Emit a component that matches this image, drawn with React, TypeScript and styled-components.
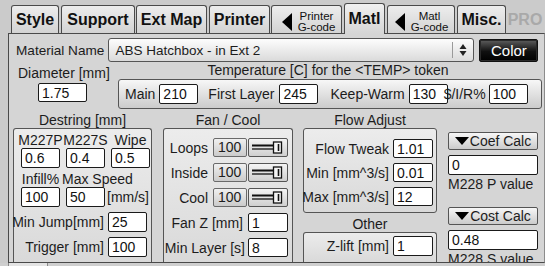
import React from "react";
import styled, { createGlobalStyle, css } from "styled-components";

const GlobalStyle = createGlobalStyle`
  html, body {
    margin: 0;
    padding: 0;
    background: #cbcbcb;
  }
  body {
    font-family: "Liberation Sans", Arial, sans-serif;
    font-size: 14px;
    color: #1c1c1c;
  }
  * {
    box-sizing: border-box;
  }
`;

const Screen = styled.div`
  width: 545px;
  height: 266px;
  overflow: hidden;
  display: flex;
  flex-direction: column;
`;

/* ---------- tabs ---------- */

const TabBar = styled.div`
  display: flex;
  align-items: flex-end;
  height: 33px;
  padding-left: 11px;
  position: relative;
  z-index: 2;
`;

const Tab = styled.div<{ $w: number; $gap?: number; $active?: boolean; $muted?: boolean }>`
  width: ${p => p.$w}px;
  margin-left: ${p => p.$gap ?? 0}px;
  height: ${p => (p.$active ? 31 : 28)}px;
  margin-bottom: ${p => (p.$active ? -1 : 0)}px;
  flex-shrink: 0;
  display: flex;
  align-items: center;
  justify-content: center;
  border: 1px solid #4a4a4a;
  border-bottom: none;
  border-radius: 3px 3px 0 0;
  background: linear-gradient(#ededed, #d3d3d3);
  font-size: 16px;
  font-weight: bold;
  color: #111;
  ${p =>
    p.$active &&
    css`
      background: linear-gradient(#f0f0f0, #d5d5d5);
    `}
  ${p =>
    p.$muted &&
    css`
      border-color: transparent;
      background: transparent;
      color: #a9a9a9;
    `}
`;

const ArrowTab = styled(Tab)<{ $pad: number }>`
  justify-content: flex-start;
  align-items: flex-end;
  padding-left: ${p => p.$pad}px;
  padding-bottom: 0;
`;

const LeftTri = styled.span`
  width: 0;
  height: 0;
  margin-bottom: 2px;
  border-top: 9px solid transparent;
  border-bottom: 9px solid transparent;
  border-right: 10px solid #000;
  flex-shrink: 0;
`;

const TwoLine = styled.span`
  flex: 1;
  text-align: center;
  font-size: 11.5px;
  font-weight: normal;
  line-height: 11px;
  padding-bottom: 0;
  height: 22px;
`;

/* ---------- panel ---------- */

const Panel = styled.div`
  margin-left: 8px;
  height: 230px;
  flex-shrink: 0;
  border: 1px solid #4a4a4a;
  border-right-color: #8c8c8c;
  background: #d5d5d5;
  padding: 4px 2px 0 4px;
  display: flex;
  flex-direction: column;
  overflow: hidden;
`;

const BottomStrip = styled.div`
  flex: 1;
  display: flex;
  background: #cfcfcf;
`;

const StripNub = styled.div`
  margin-left: 8px;
  width: 40px;
  border-left: 1px solid #8a8a8a;
  border-right: 1px solid #8a8a8a;
  background: #e4e4e4;
`;

const Row = styled.div<{ $mt?: number; $h?: number }>`
  display: flex;
  align-items: ${p => (p.$h ? "center" : "flex-start")};
  margin-top: ${p => p.$mt ?? 0}px;
  ${p => p.$h && `height: ${p.$h}px;`}
  flex-shrink: 0;
`;

const Text = styled.span<{ $ml?: number; $size?: number }>`
  margin-left: ${p => p.$ml ?? 0}px;
  font-size: ${p => p.$size ?? 14}px;
  white-space: nowrap;
  flex-shrink: 0;
`;

const Select = styled.div`
  width: 366px;
  height: 24px;
  margin-left: 4px;
  border: 1px solid #555;
  border-radius: 3px;
  background: linear-gradient(#fdfdfd, #dadada);
  display: flex;
  align-items: center;
  padding-left: 6px;
  font-size: 13.5px;
`;

const SelectValue = styled.span`
  flex: 1;
  white-space: nowrap;
`;

const SelectArrows = styled.span`
  width: 21px;
  height: 16px;
  border-left: 1px solid #9a9a9a;
  display: flex;
  align-items: center;
  justify-content: center;
`;

const ColorButton = styled.div`
  width: 59px;
  height: 23px;
  margin-left: 5px;
  border: 1px solid #111;
  border-radius: 2px;
  background: linear-gradient(#5e5e5e, #101010 55%, #000);
  color: #fff;
  font-size: 15px;
  display: flex;
  align-items: center;
  justify-content: center;
  box-shadow: inset 0 0 0 1px #2a2a2a;
`;

const Field = styled.input<{ $w?: number; $h?: number; $ml?: number }>`
  width: ${p => p.$w ?? 39}px;
  height: ${p => p.$h ?? 20}px;
  margin: 0 0 0 ${p => p.$ml ?? 0}px;
  flex-shrink: 0;
  background: #fff;
  border: 1px solid #1a1a1a;
  border-radius: 2px;
  padding: 0 0 0 3px;
  font-family: "Liberation Sans", Arial, sans-serif;
  font-size: 14px;
  color: #111;
  outline: none;
`;

const Heading = styled.div<{ $pr?: number }>`
  height: 17px;
  line-height: 16px;
  text-align: center;
  white-space: nowrap;
  padding-right: ${p => p.$pr ?? 0}px;
`;

const DiameterBlock = styled.div`
  width: 105px;
  display: flex;
  flex-direction: column;
  padding-left: 5px;
  padding-top: 3px;
  line-height: 16px;
`;

const TempBlock = styled.div`
  width: 424px;
  display: flex;
  flex-direction: column;
`;

const Raised = styled.div`
  border: 1px solid #555;
  border-radius: 3px;
  background: linear-gradient(#f7f7f7, #cbcbcb);
`;

const TempBox = styled(Raised)`
  height: 30px;
  display: flex;
  align-items: center;
  padding-left: 6px;
`;

/* ---------- lower columns ---------- */

const Columns = styled.div`
  flex: 1;
  display: flex;
  margin-top: 3px;
  min-height: 0;
`;

const Column = styled.div<{ $w: number; $ml?: number }>`
  width: ${p => p.$w}px;
  margin-left: ${p => p.$ml ?? 0}px;
  display: flex;
  flex-direction: column;
  flex-shrink: 0;
`;

const GroupBox = styled.div<{ $open?: boolean; $pt?: number; $pr?: number; $gap?: number }>`
  border: 1px solid #555;
  border-radius: 3px;
  background: linear-gradient(#ececec, #d9d9d9);
  padding: ${p => p.$pt ?? 3}px ${p => p.$pr ?? 4}px 6px 4px;
  display: flex;
  flex-direction: column;
  gap: ${p => p.$gap ?? 0}px;
  ${p =>
    p.$open &&
    css`
      flex: 1;
      border-bottom: none;
      border-radius: 3px 3px 0 0;
    `}
`;

const DestringGrid = styled.div`
  display: grid;
  grid-template-columns: repeat(3, 45px);
  grid-template-rows: 16px 20px 19px 20px;
  justify-items: center;
  line-height: 16px;
`;

const ColLabel = styled.span<{ $span?: boolean }>`
  white-space: nowrap;
  align-self: end;
  ${p =>
    p.$span &&
    css`
      grid-column: span 2;
      justify-self: start;
      margin-left: -1px;
    `}
`;

const Unit = styled.span`
  justify-self: start;
  align-self: center;
  margin-left: -1px;
  white-space: nowrap;
`;

const PairRow = styled.div<{ $mt?: number; $h?: number; $gap?: number }>`
  display: flex;
  justify-content: flex-end;
  align-items: center;
  gap: ${p => p.$gap ?? 4}px;
  height: ${p => p.$h ?? 20}px;
  margin-top: ${p => p.$mt ?? 0}px;
  white-space: nowrap;
`;

const Readout = styled.div`
  width: 34px;
  height: 19px;
  border: 1px solid #6a6a6a;
  border-radius: 2px;
  background: linear-gradient(#f0f0f0, #cbcbcb);
  padding-left: 4px;
  line-height: 17px;
  margin-left: 1px;
`;

const Slider = styled.div`
  width: 40px;
  height: 19px;
  margin-left: -3px;
  border: 1px solid #555;
  border-radius: 2px;
  background: linear-gradient(#f4f4f4, #cfcfcf);
`;

const CalcButton = styled(Raised)`
  height: 20px;
  display: flex;
  align-items: center;
  justify-content: center;
  border-radius: 2px;
  white-space: nowrap;
`;

const DownTri = styled.span`
  width: 0;
  height: 0;
  border-left: 7px solid transparent;
  border-right: 7px solid transparent;
  border-top: 8px solid #000;
  margin-right: 1px;
`;

const Caption = styled.div`
  line-height: 16px;
  margin-top: 1px;
  white-space: nowrap;
`;

const FanSlider = () => (
  <Slider>
    <svg width="38" height="17" viewBox="0 0 38 17">
      <line x1="3" y1="6.5" x2="25" y2="6.5" stroke="#111" strokeWidth="2" />
      <line x1="3" y1="10" x2="25" y2="10" stroke="#111" strokeWidth="1.3" />
      <rect x="24.5" y="3" width="8" height="11" fill="#f4f4f4" stroke="#111" strokeWidth="1.3" />
      <line x1="29.5" y1="5" x2="29.5" y2="12" stroke="#111" strokeWidth="1.6" />
    </svg>
  </Slider>
);

const SliderRow = ({ label, mt }: { label: string; mt?: number }) => (
  <PairRow $h={19} $mt={mt} $gap={4}>
    <span>{label}</span>
    <Readout>100</Readout>
    <FanSlider />
  </PairRow>
);

const App: React.FC = () => (
  <Screen>
    <GlobalStyle />
    <TabBar>
      <Tab $w={48}>Style</Tab>
      <Tab $w={74} $gap={2}>Support</Tab>
      <Tab $w={71} $gap={1}>Ext Map</Tab>
      <Tab $w={61} $gap={2}>Printer</Tab>
      <ArrowTab $w={71} $gap={1} $pad={10}>
        <LeftTri />
        <TwoLine>Printer<br />G-code</TwoLine>
      </ArrowTab>
      <Tab $w={41} $gap={2} $active>Matl</Tab>
      <ArrowTab $w={68} $gap={2} $pad={7}>
        <LeftTri />
        <TwoLine>Matl<br />G-code</TwoLine>
      </ArrowTab>
      <Tab $w={49} $gap={2}>Misc.</Tab>
      <Tab $w={38} $muted>PRO</Tab>
    </TabBar>

    <Panel>
      <Row $h={24}>
        <Text $ml={3} $size={13.6}>Material Name</Text>
        <Select>
          <SelectValue>ABS Hatchbox - in Ext 2</SelectValue>
          <SelectArrows>
            <svg width="8" height="16" viewBox="0 0 8 16">
              <path d="M4 2 L7.5 7 L0.5 7 Z" fill="#222" />
              <path d="M4 14 L7.5 9 L0.5 9 Z" fill="#222" />
            </svg>
          </SelectArrows>
        </Select>
        <ColorButton>Color</ColorButton>
      </Row>

      <Row>
        <DiameterBlock>
          <span>Diameter [mm]</span>
          <Field $ml={20} $w={49} $h={19} style={{ marginTop: 2 }} defaultValue="1.75" readOnly />
        </DiameterBlock>
        <TempBlock>
          <Heading $pr={4}>Temperature [C] for the &lt;TEMP&gt; token</Heading>
          <TempBox>
            <Text>Main</Text>
            <Field $ml={4} defaultValue="210" readOnly />
            <Text $ml={10}>First Layer</Text>
            <Field $ml={5} defaultValue="245" readOnly />
            <Text $ml={12}>Keep-Warm</Text>
            <Field $ml={4} defaultValue="130" readOnly />
            <Text $ml={-4}>$/I/R%</Text>
            <Field $ml={3} defaultValue="100" readOnly />
          </TempBox>
        </TempBlock>
      </Row>

      <Columns>
        <Column $w={139}>
          <Heading>Destring [mm]</Heading>
          <GroupBox $open>
            <DestringGrid>
              <ColLabel>M227P</ColLabel>
              <ColLabel>M227S</ColLabel>
              <ColLabel>Wipe</ColLabel>
              <Field defaultValue="0.6" readOnly />
              <Field defaultValue="0.4" readOnly />
              <Field defaultValue="0.5" readOnly />
              <ColLabel>Infill%</ColLabel>
              <ColLabel $span>Max Speed</ColLabel>
              <Field defaultValue="100" readOnly />
              <Field defaultValue="50" readOnly />
              <Unit>[mm/s]</Unit>
            </DestringGrid>
            <PairRow $mt={5}>
              <span>Min Jump[mm]</span>
              <Field defaultValue="25" readOnly />
            </PairRow>
            <PairRow $mt={5}>
              <span>Trigger [mm]</span>
              <Field defaultValue="100" readOnly />
            </PairRow>
          </GroupBox>
        </Column>

        <Column $w={130} $ml={11}>
          <Heading>Fan / Cool</Heading>
          <GroupBox $open $pt={9} $gap={6}>
            <SliderRow label="Loops" />
            <SliderRow label="Inside" />
            <SliderRow label="Cool" />
            <PairRow $h={19} $gap={5}>
              <span>Fan Z [mm]</span>
              <Field $w={40} $h={19} defaultValue="1" readOnly />
            </PairRow>
            <PairRow $h={19} $gap={3}>
              <span>Min Layer [s]</span>
              <Field $w={40} $h={19} defaultValue="8" readOnly />
            </PairRow>
          </GroupBox>
        </Column>

        <Column $w={134} $ml={10}>
          <Heading>Flow Adjust</Heading>
          <GroupBox $pt={10} $pr={3} $gap={5}>
            <PairRow $h={19}>
              <span>Flow Tweak</span>
              <Field $w={40} $h={19} defaultValue="1.01" readOnly />
            </PairRow>
            <PairRow $h={19}>
              <span>Min [mm^3/s]</span>
              <Field $w={40} $h={19} defaultValue="0.01" readOnly />
            </PairRow>
            <PairRow $h={19}>
              <span>Max [mm^3/s]</span>
              <Field $w={40} $h={19} defaultValue="12" readOnly />
            </PairRow>
          </GroupBox>
          <Heading style={{ marginTop: 3 }}>Other</Heading>
          <GroupBox as={Raised} $open $pt={3} $pr={3}>
            <PairRow>
              <span>Z-lift [mm]</span>
              <Field $w={40} defaultValue="1" readOnly />
            </PairRow>
          </GroupBox>
        </Column>

        <Column $w={90} $ml={11} style={{ paddingTop: 20 }}>
          <CalcButton>
            <DownTri />
            Coef Calc
          </CalcButton>
          <Field $w={90} $h={20} $ml={0} style={{ marginTop: 5 }} defaultValue="0" readOnly />
          <Caption>M228 P value</Caption>
          <CalcButton style={{ marginTop: 15 }}>
            <DownTri />
            Cost Calc
          </CalcButton>
          <Field $w={90} $h={20} style={{ marginTop: 5 }} defaultValue="0.48" readOnly />
          <Caption>M228 S value</Caption>
        </Column>
      </Columns>
    </Panel>
    <BottomStrip>
      <StripNub />
    </BottomStrip>
  </Screen>
);

export default App;
